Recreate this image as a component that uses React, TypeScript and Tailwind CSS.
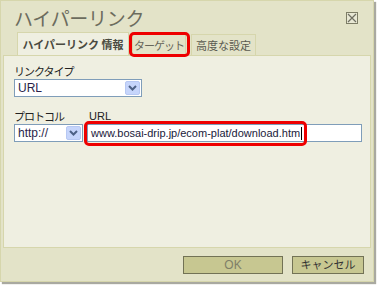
import React from "react";

const jp = "font-['Noto_Sans_CJK_JP','Noto_Sans',sans-serif]";
const latin = "font-['Liberation_Sans','Noto_Sans_CJK_JP',sans-serif]";

const Arrow = () => (
  <div className="flex h-[14px] w-[15px] items-center justify-center rounded-[2px] border border-[#b7c8f3] bg-[#c6d5fb]">
    <svg width="9" height="6" viewBox="0 0 9 6">
      <path d="M1 1 L4.5 4.5 L8 1" fill="none" stroke="#4d6185" strokeWidth="2" />
    </svg>
  </div>
);

const Select = ({ value, width }: { value: string; width: string }) => (
  <div
    className={`flex h-[18px] ${width} items-center justify-between border border-[#7f9db9] bg-white pl-[3px] pr-[1px]`}
  >
    <span className={`${latin} text-[12px] leading-none text-[#2a1f4a]`}>{value}</span>
    <Arrow />
  </div>
);

export default function App() {
  return (
    <div className="h-[285px] w-[380px] bg-white">
      <div className="flex h-[282px] w-[374px] flex-col border border-[#d6d6ac] bg-[#e3e3c8] shadow-[2px_2px_1px_#a9a9a0]">
        {/* header */}
        <div className="relative flex h-[54px] flex-col">
          <div className={`${jp} pl-[13px] pt-[3px] text-[19px] leading-[28px] tracking-[-0.3px] text-[#6c6c5e]`}>
            ハイパーリンク
          </div>
          <div className="absolute right-[15px] top-[11px] flex h-[12px] w-[12px] items-center justify-center border border-[#7d7d66] bg-[#e8e8d4]">
            <svg width="10" height="10" viewBox="0 0 10 10">
              <path d="M1 1 L9 9 M9 1 L1 9" stroke="#6f6f62" strokeWidth="1.2" />
            </svg>
          </div>
          <div className="mt-auto flex items-end pl-[16px]">
            <div className={`${jp} flex h-[23px] w-[112px] items-center justify-center border border-b-0 border-[#d6d6ac] bg-[#efefe1] text-[11px] font-bold text-[#4a4a40]`}>
              ハイパーリンク 情報
            </div>
            <div className="relative ml-[3px] flex h-[21px] w-[54px] items-center justify-center border border-b-0 border-[#d6d6ac] bg-[#e3e3c8]">
              <span className={`${jp} text-[11px] tracking-[-1px] text-[#66665a]`}>ターゲット</span>
              <div className="absolute left-[-4px] top-[-3px] h-[25px] w-[61px] rounded-[5px] border-[3px] border-[#ee0000]" />
            </div>
            <div className={`${jp} ml-[5px] flex h-[21px] w-[65px] items-center justify-center border border-b-0 border-[#d6d6ac] bg-[#e3e3c8] text-[11px] text-[#5a5a50]`}>
              高度な設定
            </div>
          </div>
        </div>

        {/* body */}
        <div className="mx-[2px] flex h-[193px] flex-col border border-[#d6d6ac] bg-[#efefe1] pl-[10px] pt-[8px]">
          <div className={`${jp} text-[11px] leading-[14px] tracking-[-1px] text-[#222]`}>リンクタイプ</div>
          <div className="mt-[1px]">
            <Select value="URL" width="w-[128px]" />
          </div>
          <div className="mt-[12px] flex items-start">
            <div className="flex flex-col">
              <div className={`${jp} text-[11px] leading-[14px] tracking-[-1px] text-[#222]`}>プロトコル</div>
              <div className="mt-[1px]">
                <Select value="http://" width="w-[69px]" />
              </div>
            </div>
            <div className="ml-[4px] flex flex-col">
              <div className={`${latin} pl-[2px] text-[11px] leading-[14px] text-[#222]`}>URL</div>
              <div className="relative mt-[1px]">
                <div className="flex h-[18px] w-[275px] items-center border border-[#7f9db9] bg-white pl-[3px]">
                  <span className={`${latin} text-[11px] leading-none text-[#1a1a3a]`}>
                    www.bosai-drip.jp/ecom-plat/download.htm
                  </span>
                  <span className="ml-[1px] h-[13px] w-[1px] bg-black" />
                </div>
                <div className="absolute left-[-3px] top-[-3px] h-[25px] w-[223px] rounded-[5px] border-[3px] border-[#ee0000]" />
              </div>
            </div>
          </div>
        </div>

        {/* footer */}
        <div className="flex flex-1 items-center justify-end gap-[9px] pr-[9px]">
          <div className={`${latin} flex h-[18px] w-[100px] items-center justify-center border border-[#727255] bg-[#c7c791] text-[12px] text-[#7f7f68]`}>
            OK
          </div>
          <div className={`${jp} flex h-[18px] w-[72px] items-center justify-center border border-[#727255] bg-[#c7c791] text-[11px] text-[#333]`}>
            キャンセル
          </div>
        </div>
      </div>
    </div>
  );
}
